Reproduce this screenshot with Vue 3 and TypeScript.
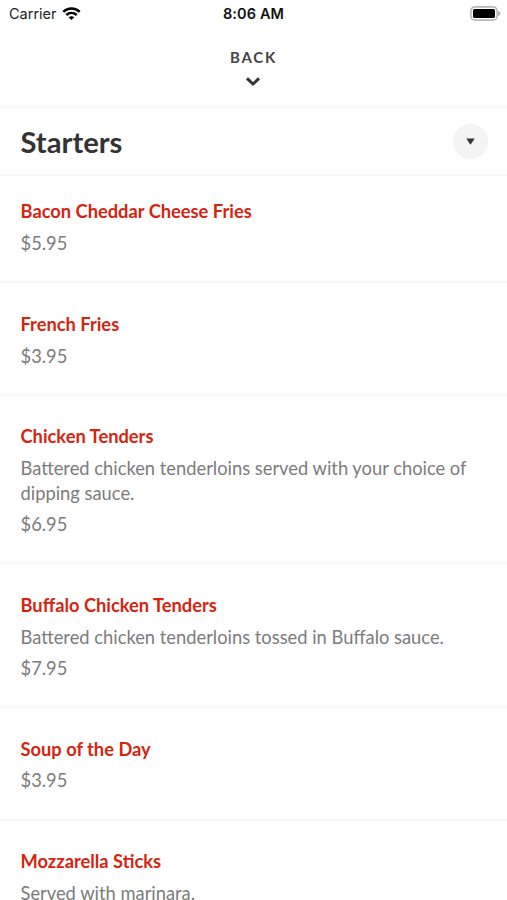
<script setup lang="ts">
interface MenuItem {
  name: string
  description?: string
  price?: string
}

const items: MenuItem[] = [
  { name: 'Bacon Cheddar Cheese Fries', price: '$5.95' },
  { name: 'French Fries', price: '$3.95' },
  { name: 'Chicken Tenders', description: 'Battered chicken tenderloins served with your choice of dipping sauce.', price: '$6.95' },
  { name: 'Buffalo Chicken Tenders', description: 'Battered chicken tenderloins tossed in Buffalo sauce.', price: '$7.95' },
  { name: 'Soup of the Day', price: '$3.95' },
  { name: 'Mozzarella Sticks', description: 'Served with marinara.' },
]
</script>

<template>
  <main class="screen">
    <header class="status">
      <div class="carrier">
        <span>Carrier</span>
        <svg class="wifi" width="19" height="14" viewBox="0 0 20 14" fill="none" stroke="#000" stroke-width="2.7">
          <path d="M1.4 4.8C6.2.1 13.8.1 18.6 4.8" />
          <path d="M4.5 8.1c3.2-3 7.8-3 11 0" />
          <path d="M7 10.4c1.8-1.5 4.2-1.5 6 0l-3 3z" fill="#000" stroke="none" />
        </svg>
      </div>
      <time class="time">8:06 AM</time>
      <svg class="battery" width="31" height="15" viewBox="0 0 31 15">
        <rect x=".9" y=".9" width="26.2" height="13.2" rx="3.8" fill="#fff" stroke="#b8b8b8" stroke-width="1.6" />
        <rect x="3" y="3" width="22" height="9" rx="1.5" />
        <path d="M28.2 5c2.8 1 2.8 4 0 5z" fill="#aaa" />
      </svg>
    </header>
    <button class="back">
      <span>BACK</span>
      <svg width="16" height="11" viewBox="0 0 16 11" fill="none" stroke="#333" stroke-width="3">
        <path d="M2 2.4l6 5.6 6-5.6" />
      </svg>
    </button>
    <section class="heading">
      <h1>Starters</h1>
      <button class="toggle" aria-label="Choose section">
        <svg width="9" height="7" viewBox="0 0 9 7"><path d="M.3.4h8.4L4.5 6.7z" fill="#333" /></svg>
      </button>
    </section>
    <ul class="menu">
      <li v-for="item in items" :key="item.name" class="item">
        <h2>{{ item.name }}</h2>
        <p v-if="item.description">{{ item.description }}</p>
        <p v-if="item.price">{{ item.price }}</p>
      </li>
    </ul>
  </main>
</template>

<style>
body { background: #fff; }
</style>

<style scoped>
* { box-sizing: border-box; margin: 0; }
.screen {
  height: 900px;
  overflow: hidden;
  background: #fff;
  font-family: Lato, sans-serif;
}
.status {
  display: grid;
  grid-template-columns: 1fr auto 1fr;
  height: 28px;
  padding: 0 6px 0 9px;
  align-items: center;
  font: 14.5px/28px Inter, sans-serif;
  color: #222;
}
.carrier { display: flex; align-items: center; gap: 5px; }
.wifi { margin-top: -1px; }
.time { margin-left: -3px; font-weight: 600; letter-spacing: .1px; color: #111; }
.battery { justify-self: end; margin-top: -2px; }
button { border: 0; padding: 0; font: inherit; }
.back {
  display: flex;
  flex-direction: column;
  align-items: center;
  width: 100%;
  height: 80px;
  padding-top: 19px;
  background: #fff;
  border-bottom: 2px solid #f7f7f7;
  color: #444;
  font-size: 15px;
  font-weight: 700;
  line-height: 20px;
  letter-spacing: 1.8px;
}
.back svg { margin: 9px 1px 0 0; }
.heading {
  display: flex;
  align-items: center;
  justify-content: space-between;
  height: 68.4px;
  padding: 0 19px 0 20.5px;
  border-bottom: 2px solid #f7f7f7;
}
h1 { font-size: 29.2px; font-weight: 700; color: #333; }
.toggle {
  display: flex;
  align-items: center;
  justify-content: center;
  width: 35px;
  height: 35px;
  border-radius: 50%;
  background: #f4f4f4;
}
.menu { padding: 0; list-style: none; }
.item {
  padding: 28.4px 20.5px 25.5px;
  border-bottom: 2px solid #f7f7f7;
  line-height: 24.7px;
}
.item:first-child { padding-top: 23px; }
h2 { font-size: 18.3px; font-weight: 700; line-height: 25px; color: #d62410; }
p { margin-top: 6.8px; font-size: 18.33px; color: #7c7c7c; }
</style>
